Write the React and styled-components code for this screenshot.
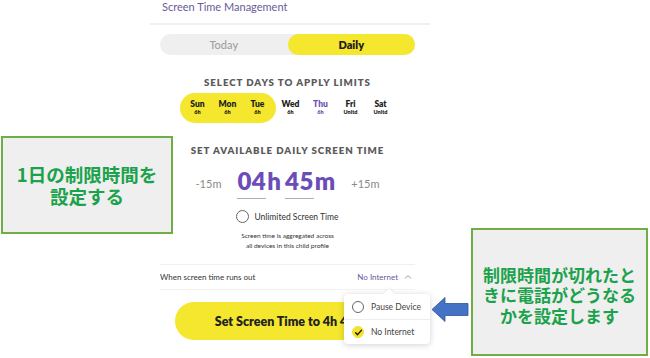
import React from "react";
import styled, { createGlobalStyle } from "styled-components";

const Global = createGlobalStyle`
  html, body { margin: 0; padding: 0; background: #fff; }
  body { font-family: Lato, "Open Sans", sans-serif; }
  * { box-sizing: border-box; }
`;

const Page = styled.div`
  position: relative;
  width: 650px;
  height: 358px;
  overflow: hidden;
  background: #fff;
`;

const Panel = styled.div`
  margin-left: 150px;
  width: 280px;
  display: flex;
  flex-direction: column;
`;

const Title = styled.div`
  height: 25px;
  padding: 0 0 0 12px;
  font-size: 11px;
  line-height: 14px;
  color: #6a5a9c;
  border-bottom: 2px solid #efefef;
`;

const Content = styled.div`
  padding: 0 15px 0 10px;
  display: flex;
  flex-direction: column;
  align-items: stretch;
`;

const Toggle = styled.div`
  margin-top: 9px;
  height: 21px;
  display: flex;
  background: #efefef;
  border-radius: 11px;
`;

const ToggleOpt = styled.div`
  flex: 1;
  display: flex;
  align-items: center;
  justify-content: center;
  border-radius: 11px;
  font-size: 11px;
  background: ${(p) => (p.$active ? "#f4e72d" : "transparent")};
  color: ${(p) => (p.$active ? "#1c1c1c" : "#a0a0a0")};
  font-weight: ${(p) => (p.$active ? 800 : 500)};
`;

const SectionHead = styled.div`
  text-align: center;
  font-size: 9.7px;
  line-height: 12px;
  font-weight: 800;
  letter-spacing: 0.95px;
  color: #5a5a5a;
  margin-top: ${(p) => p.$mt}px;
`;

const DayRow = styled.div`
  margin-top: 5px;
  display: flex;
  justify-content: center;
`;

const Pill = styled.div`
  display: flex;
  padding: 0 3px;
  background: #f4e72d;
  border-radius: 15px;
`;

const Day = styled.div`
  width: 30px;
  height: 30px;
  display: flex;
  flex-direction: column;
  align-items: center;
  justify-content: center;
  color: ${(p) => (p.$today ? "#6e55b5" : "#1e1e1e")};
`;

const DayName = styled.div`
  font-size: 8.5px;
  line-height: 9px;
  font-weight: 800;
`;

const DayVal = styled.div`
  font-size: 5.5px;
  line-height: 7px;
  font-weight: 800;
`;

const TimeRow = styled.div`
  margin-top: 13px;
  display: flex;
  align-items: center;
  justify-content: center;
  height: 29px;
`;

const Step = styled.div`
  font-size: 11px;
  color: #8a8a8a;
  margin: ${(p) => (p.$right ? "0 0 0 14px" : "0 14px 0 0")};
`;

const TimePart = styled.div`
  display: flex;
  align-items: baseline;
  color: #6b4db8;
  font-weight: 800;
  font-size: 24px;
  line-height: 24px;
  margin: 0 2px;
`;

const Digits = styled.span`
  border-bottom: 1px solid #b0b0b0;
  padding-bottom: 5px;
  letter-spacing: 0.5px;
`;

const Unit = styled.span`
  margin-left: 1px;
`;

const RadioRow = styled.div`
  margin-top: 12px;
  display: flex;
  align-items: center;
  justify-content: center;
  gap: 5px;
  font-size: 8.5px;
  color: #333;
`;

const Circle = styled.span`
  width: ${(p) => p.$size || 13}px;
  height: ${(p) => p.$size || 13}px;
  border-radius: 50%;
  border: 1.3px solid ${(p) => (p.$checked ? "#f3e22e" : "#666")};
  background: ${(p) => (p.$checked ? "#f3e22e" : "#fff")};
  display: inline-flex;
  align-items: center;
  justify-content: center;
  flex: none;
`;

const Caption = styled.div`
  margin-top: 8px;
  text-align: center;
  font-size: 6.5px;
  line-height: 10px;
  color: #333;
`;

const OutRow = styled.div`
  margin-top: 13px;
  height: 26px;
  border-top: 1px solid #efefef;
  border-bottom: 1px solid #f3f3f3;
  display: flex;
  align-items: center;
  justify-content: space-between;
  font-size: 8px;
  color: #333;
`;

const OutValue = styled.div`
  display: flex;
  align-items: center;
  gap: 6px;
  color: #6a5a9c;
  padding-right: 3px;
`;

const SetButton = styled.div`
  margin: 12px 0 0 15px;
  width: 230px;
  height: 38px;
  border-radius: 19px;
  background: #f4e72d;
  display: flex;
  align-items: center;
  justify-content: center;
  font-size: 12.5px;
  font-weight: 800;
  color: #222;
  white-space: nowrap;
`;

const Menu = styled.div`
  position: absolute;
  left: 344px;
  top: 294px;
  width: 86px;
  background: #fff;
  border-radius: 4px;
  box-shadow: 0 1px 6px rgba(0, 0, 0, 0.18);
  display: flex;
  flex-direction: column;
  &::before {
    content: "";
    position: absolute;
    top: -4px;
    left: 41px;
    width: 8px;
    height: 8px;
    background: #fff;
    transform: rotate(45deg);
    box-shadow: -1px -1px 2px rgba(0, 0, 0, 0.06);
  }
`;

const MenuItem = styled.div`
  position: relative;
  height: 25px;
  display: flex;
  align-items: center;
  gap: 7px;
  padding-left: 8px;
  font-size: 8.5px;
  color: #444;
  border-top: ${(p) => (p.$first ? "none" : "1px solid #eeeeee")};
`;

const Callout = styled.div`
  position: absolute;
  left: ${(p) => p.$x}px;
  top: ${(p) => p.$y}px;
  width: ${(p) => p.$w}px;
  height: ${(p) => p.$h}px;
  background: #efefef;
  border: 2.5px solid #70ad47;
  display: flex;
  align-items: center;
  justify-content: center;
  text-align: center;
  font-family: "Noto Sans CJK JP", sans-serif;
  font-weight: 700;
  color: #1ba24b;
  font-size: ${(p) => p.$fs}px;
  line-height: ${(p) => p.$lh}px;
  padding-top: ${(p) => p.$pt || 0}px;
`;

const ArrowSvg = styled.svg`
  position: absolute;
  left: 431px;
  top: 296px;
`;

const Check = () => (
  <svg width="9" height="9" viewBox="0 0 10 10">
    <path d="M1.8 5.2 L4 7.4 L8.4 2.4" fill="none" stroke="#111" strokeWidth="1.5" strokeLinecap="round" strokeLinejoin="round" />
  </svg>
);

const ChevronUp = () => (
  <svg width="8" height="6" viewBox="0 0 8 6">
    <path d="M1 4.5 L4 1.5 L7 4.5" fill="none" stroke="#9a9a9a" strokeWidth="1" />
  </svg>
);

const days = [
  { d: "Sun", v: "6h", sel: true },
  { d: "Mon", v: "6h", sel: true },
  { d: "Tue", v: "6h", sel: true },
  { d: "Wed", v: "6h" },
  { d: "Thu", v: "6h", today: true },
  { d: "Fri", v: "Unltd" },
  { d: "Sat", v: "Unltd" },
];

const DayCell = ({ d }) => (
  <Day $today={d.today}>
    <DayName>{d.d}</DayName>
    <DayVal>{d.v}</DayVal>
  </Day>
);

export default function App() {
  return (
    <Page>
      <Global />
      <Panel>
        <Title>Screen Time Management</Title>
        <Content>
          <Toggle>
            <ToggleOpt>Today</ToggleOpt>
            <ToggleOpt $active>Daily</ToggleOpt>
          </Toggle>
          <SectionHead $mt={21}>SELECT DAYS TO APPLY LIMITS</SectionHead>
          <DayRow>
            <Pill>
              {days.filter((x) => x.sel).map((x) => (
                <DayCell key={x.d} d={x} />
              ))}
            </Pill>
            {days.filter((x) => !x.sel).map((x) => (
              <DayCell key={x.d} d={x} />
            ))}
          </DayRow>
          <SectionHead $mt={21}>SET AVAILABLE DAILY SCREEN TIME</SectionHead>
          <TimeRow>
            <Step>-15m</Step>
            <TimePart>
              <Digits>04</Digits>
              <Unit>h</Unit>
            </TimePart>
            <TimePart>
              <Digits>45</Digits>
              <Unit>m</Unit>
            </TimePart>
            <Step $right>+15m</Step>
          </TimeRow>
          <RadioRow>
            <Circle />
            Unlimited Screen Time
          </RadioRow>
          <Caption>
            Screen time is aggregated across
            <br />
            all devices in this child profile
          </Caption>
          <OutRow>
            <span>When screen time runs out</span>
            <OutValue>
              No Internet
              <ChevronUp />
            </OutValue>
          </OutRow>
          <SetButton>Set Screen Time to 4h 45m</SetButton>
        </Content>
      </Panel>

      <Menu>
        <MenuItem $first>
          <Circle $size={12} />
          Pause Device
        </MenuItem>
        <MenuItem>
          <Circle $size={12} $checked>
            <Check />
          </Circle>
          No Internet
        </MenuItem>
      </Menu>

      <Callout $x={1} $y={136} $w={172} $h={98} $fs={18.5} $lh={22}>
        1日の制限時間を
        <br />
        設定する
      </Callout>

      <Callout $x={471} $y={228} $w={177} $h={128} $fs={17} $lh={20.5} $pt={7}>
        制限時間が切れたと
        <br />
        きに電話がどうなる
        <br />
        かを設定します
      </Callout>

      <ArrowSvg width="40" height="28" viewBox="0 0 40 28">
        <path d="M1 13.5 L14 1.5 L14 7.5 L37 7.5 L37 19.5 L14 19.5 L14 25.5 Z" fill="#4472c4" stroke="#2f5597" strokeWidth="0.8" />
      </ArrowSvg>
    </Page>
  );
}
